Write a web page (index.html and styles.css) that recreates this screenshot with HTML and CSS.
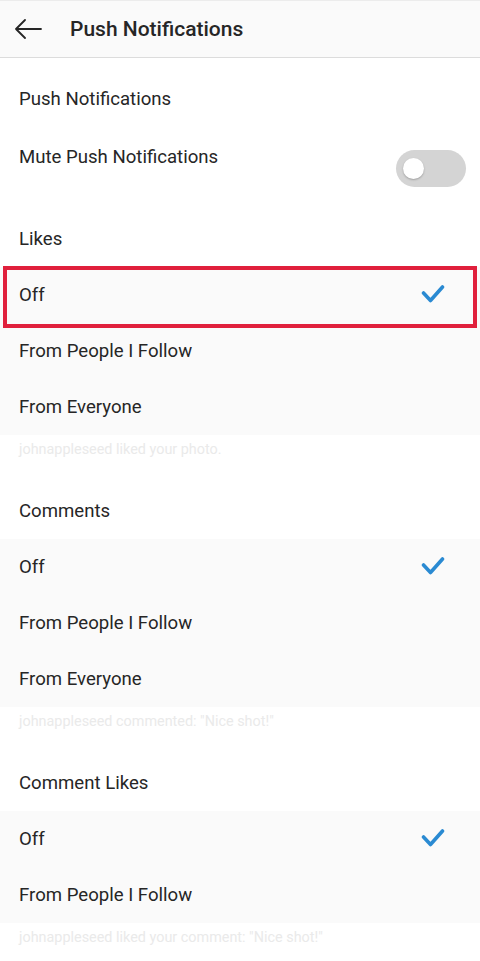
FILE: index.html
```html
<!DOCTYPE html>
<html>
<head>
<meta charset="utf-8">
<link rel="stylesheet" href="styles.css">
</head>
<body>
<header class="topbar">
  <svg class="back" width="28" height="20" viewBox="0 0 28 20"><path d="M27 10H2M11 1L2 10l9 9" fill="none" stroke="#262626" stroke-width="1.8" stroke-linecap="round" stroke-linejoin="round"/></svg>
  <h1 class="title">Push Notifications</h1>
</header>
<main>
  <div class="label-row">Push Notifications</div>
  <div class="mute-row">
    <span>Mute Push Notifications</span>
    <span class="toggle"><span class="knob"></span></span>
  </div>

  <div class="section-head">Likes</div>
  <div class="options">
    <div class="opt selected">Off<svg class="check" width="24" height="20" viewBox="0 0 24 20"><path d="M2.5 9l7 7.5L21.5 3" fill="none" stroke="#2a8ad2" stroke-width="3.6" stroke-linecap="round" stroke-linejoin="round"/></svg><span class="highlight"></span></div>
    <div class="opt">From People I Follow</div>
    <div class="opt">From Everyone</div>
  </div>
  <div class="example">johnappleseed liked your photo.</div>

  <div class="section-head">Comments</div>
  <div class="options">
    <div class="opt">Off<svg class="check" width="24" height="20" viewBox="0 0 24 20"><path d="M2.5 9l7 7.5L21.5 3" fill="none" stroke="#2a8ad2" stroke-width="3.6" stroke-linecap="round" stroke-linejoin="round"/></svg></div>
    <div class="opt">From People I Follow</div>
    <div class="opt">From Everyone</div>
  </div>
  <div class="example">johnappleseed commented: "Nice shot!"</div>

  <div class="section-head">Comment Likes</div>
  <div class="options">
    <div class="opt">Off<svg class="check" width="24" height="20" viewBox="0 0 24 20"><path d="M2.5 9l7 7.5L21.5 3" fill="none" stroke="#2a8ad2" stroke-width="3.6" stroke-linecap="round" stroke-linejoin="round"/></svg></div>
    <div class="opt">From People I Follow</div>
  </div>
  <div class="example">johnappleseed liked your comment: "Nice shot!"</div>
</main>
</body>
</html>
```

FILE: styles.css
```css
* { box-sizing: border-box; }
html, body { margin: 0; padding: 0; }
body {
  background: #ffffff;
  font-family: Roboto, "Noto Sans", "Liberation Sans", sans-serif;
  color: #262626;
  width: 480px;
  overflow: hidden;
}
.topbar {
  height: 58px;
  background: #fafafa;
  border-top: 1px solid #ececec;
  border-bottom: 1px solid #dcdcdc;
  display: flex;
  align-items: center;
  padding-left: 14px;
}
.back { display: block; flex: none; }
.title {
  margin: 0 0 0 28px;
  font-size: 21px;
  font-weight: 500;
  color: #262626;
}
main { padding-top: 13px; }
.label-row {
  height: 56px;
  display: flex;
  align-items: center;
  padding-left: 19px;
  font-size: 18.6px;
}
.mute-row {
  height: 84px;
  display: flex;
  justify-content: space-between;
  align-items: flex-start;
  padding: 20px 14px 0 19px;
  font-size: 18.6px;
  line-height: 20px;
}
.toggle {
  position: relative;
  width: 70px;
  height: 37px;
  border-radius: 19px;
  background: #d4d4d4;
  margin-top: 3px;
  flex: none;
}
.knob {
  position: absolute;
  left: 7px;
  top: 8px;
  width: 21px;
  height: 21px;
  border-radius: 50%;
  background: #ffffff;
  box-shadow: 0 1px 2px rgba(0,0,0,0.25);
}
.section-head {
  height: 56px;
  display: flex;
  align-items: center;
  padding-left: 19px;
  font-size: 18.6px;
}
.options { background: #fafafa; }
.opt {
  position: relative;
  height: 56px;
  display: flex;
  align-items: center;
  justify-content: space-between;
  padding: 0 35px 0 19px;
  font-size: 18.6px;
}
.check { display: block; margin-top: -2px; }
.highlight {
  position: absolute;
  left: 3px;
  right: 3px;
  top: -1px;
  height: 62px;
  border: 4px solid #e0203c;
  pointer-events: none;
}
.example {
  height: 48px;
  padding: 6px 0 0 19px;
  font-size: 14.4px;
  line-height: 18px;
  color: #eaeaea;
}
```
